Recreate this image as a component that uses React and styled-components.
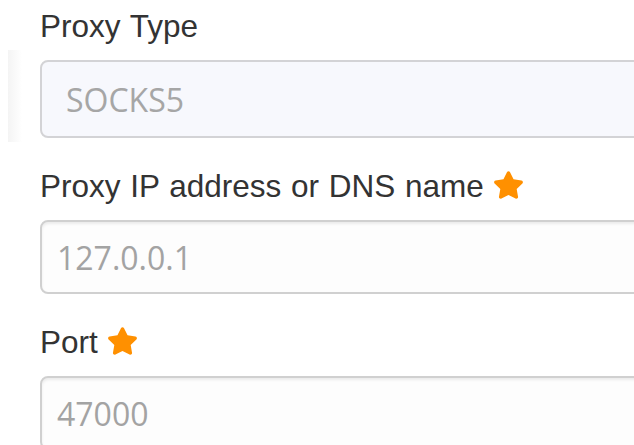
import React from 'react';
import styled, { createGlobalStyle } from 'styled-components';

const GlobalStyle = createGlobalStyle`
  html, body {
    margin: 0;
    padding: 0;
    background: #fff;
    overflow: hidden;
  }
`;

function RequiredStar() {
  return (
    <StarIcon viewBox="0 0 576 512" aria-hidden="true">
      <path d="M259.3 17.8 194 150.2 47.9 171.5c-26.2 3.8-36.7 36.1-17.7 54.6l105.7 103-25 145.5c-4.5 26.3 23.2 46 46.4 33.7L288 439.6l130.7 68.7c23.2 12.2 50.9-7.4 46.4-33.7l-25-145.5 105.7-103c19-18.5 8.5-50.8-17.7-54.6L382 150.2 316.7 17.8c-11.7-23.6-45.6-23.9-57.4 0z" />
    </StarIcon>
  );
}

export default function App() {
  return (
    <>
      <GlobalStyle />
      <Form>
        <Field>
          <Label>Proxy Type</Label>
          <SelectBox>SOCKS5</SelectBox>
        </Field>
        <Field>
          <Label>
            Proxy IP address or DNS name <RequiredStar />
          </Label>
          <Input type="text" placeholder="127.0.0.1" />
        </Field>
        <Field>
          <Label>
            Port <RequiredStar />
          </Label>
          <Input type="text" placeholder="47000" />
        </Field>
      </Form>
    </>
  );
}

const Form = styled.form`
  display: flex;
  flex-direction: column;
  gap: 28px;
  width: 720px;
  padding: 6px 0 0 40px;
  position: relative;

  &::before {
    content: '';
    position: absolute;
    left: 8px;
    top: 50px;
    width: 14px;
    height: 92px;
    background: linear-gradient(to right, #f4f4f4, #fff);
  }
`;

const Field = styled.div`
  display: flex;
  flex-direction: column;
  gap: 14px;
`;

const Label = styled.label`
  display: flex;
  align-items: center;
  gap: 9px;
  font-family: "Liberation Sans", Arial, sans-serif;
  font-size: 31.5px;
  word-spacing: 1px;
  line-height: 40px;
  color: #333;
`;

const StarIcon = styled.svg`
  width: 31px;
  height: 28px;
  fill: #ff9000;
  margin-top: -3px;
`;

const SelectBox = styled.div`
  box-sizing: border-box;
  height: 78px;
  display: flex;
  align-items: center;
  padding: 0 24px;
  border: 2px solid #d3d3d6;
  border-radius: 8px;
  background: #f7f8fd;
  font-family: "Open Sans", sans-serif;
  font-size: 32px;
  color: #a6a6a6;
`;

const Input = styled.input`
  box-sizing: border-box;
  width: 100%;
  height: 74px;
  padding: 0 15px;
  border: 2px solid #d0d0d0;
  border-radius: 8px;
  background: #fdfdfd;
  box-shadow: inset 0 2px 3px rgba(0, 0, 0, 0.075);
  font-family: "Open Sans", sans-serif;
  font-size: 32px;
  color: #555;

  &::placeholder {
    color: #a3a3a3;
  }

  &:focus {
    outline: none;
  }
`;
